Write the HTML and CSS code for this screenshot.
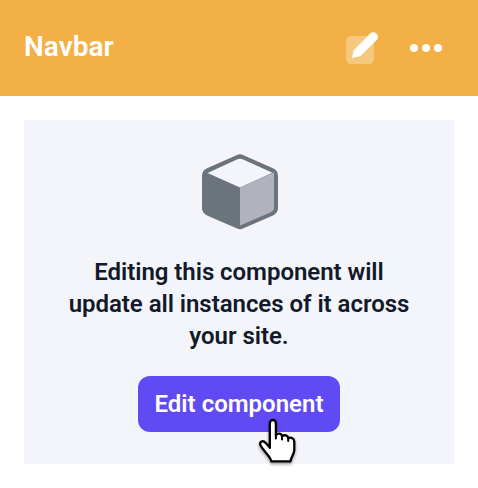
FILE: index.html
```html
<!DOCTYPE html>
<html lang="en">
<head>
<meta charset="utf-8">
<title>Navbar</title>
<link rel="stylesheet" href="styles.css">
</head>
<body>
<header class="header">
  <h1 class="title">Navbar</h1>
  <div class="actions">
    <svg class="icon" width="36" height="36" viewBox="0 0 36 36">
      <rect x="2" y="6" width="28" height="28" rx="5.5" fill="#fff" fill-opacity=".3"/>
      <path d="M8 28 9.700 20.300 26.300 3.600Q29 1 32.200 3.200Q35.400 6.400 33 9.700L16.200 26.200Z" fill="#fff"/>
    </svg>
    <svg class="icon" width="36" height="36" viewBox="0 0 36 36" fill="#fff">
      <circle cx="6" cy="18" r="4"/><circle cx="18" cy="18" r="4"/><circle cx="30" cy="18" r="4"/>
    </svg>
  </div>
</header>
<main class="panel">
  <svg class="cube" width="80" height="80" viewBox="0 0 80 80">
    <path d="M36.500 3.200Q40 1.500 43.500 3.200L73 16.300Q78 18.500 78 24V56Q78 61 73 63.500L43.500 76.300Q40 78 36.500 76.300L7 63.500Q2 61 2 56V24Q2 18.500 7 16.300Z" fill="#6b747c"/>
    <path d="M7.500 21 37.500 7.300Q40 6.300 42.500 7.300L72.500 20.800 40 35.500Z" fill="#f4f5fb"/>
    <path d="M40 35.500 74 20.500V56Q74 58.500 71.500 60L40 73.500Z" fill="#b0b3be"/>
  </svg>
  <p class="message">Editing this component will update all instances of it across your site.</p>
  <button class="button" type="button">Edit component
    <svg class="cursor" width="48" height="56" viewBox="0 0 48 56">
      <path d="M15.800 31V11.500C15.800 6.800 21.900 6.800 21.900 11.500V23.500C23.300 20.500 28 21.200 28 24.500C30 22.300 34 23.200 34.200 26.300C36.500 24.800 40.300 26.300 40.300 29.500V38C40.300 42 37 45 36.500 49.300H17.300C16.500 44 10 40 6.600 33.500C4.800 29.500 9 27.800 11.500 30.800L15.800 35.500Z" fill="#fff" stroke="#000" stroke-width="2.3" stroke-linejoin="round"/>
      <path d="M15.800 29V36M21.900 22V26.500M28 24V27.500M34.200 26V29" fill="none" stroke="#000" stroke-width="2" stroke-linecap="round"/>
    </svg>
  </button>
</main>
</body>
</html>
```

FILE: styles.css
```css
* {
  box-sizing: border-box;
}

body {
  margin: 0;
  height: 488px;
  background: #fff;
  font-family: Roboto, "Liberation Sans", sans-serif;
}

.header {
  display: flex;
  align-items: center;
  justify-content: space-between;
  height: 96px;
  padding: 0 34px 4px 24px;
  background: #f3b047;
  color: #fff;
}

.title {
  margin: 2px 0 0;
  font-size: 28px;
  font-weight: 600;
  line-height: 32px;
}

.actions {
  display: flex;
  gap: 28px;
  padding-top: 4px;
}

.icon,
.cube {
  display: block;
}

.cube {
  margin-left: 2px;
}

.panel {
  display: flex;
  flex-direction: column;
  align-items: center;
  height: 344px;
  margin: 24px;
  padding: 32px 24px;
  background: #f4f5fb;
}

.message {
  width: 360px;
  margin: 24px 0;
  color: #121a2a;
  font-size: 24px;
  font-weight: 600;
  line-height: 32px;
  letter-spacing: -0.04px;
  text-align: center;
}

.button {
  position: relative;
  width: 202px;
  height: 56px;
  padding: 0;
  border: 0;
  border-radius: 12px;
  background: #604af4;
  color: #fff;
  font: 600 24px/32px Roboto, "Liberation Sans", sans-serif;
}

.cursor {
  position: absolute;
  left: 116px;
  top: 36px;
  overflow: visible;
  filter: drop-shadow(0 2px 1.5px rgb(0 0 0 / 35%));
}
```
